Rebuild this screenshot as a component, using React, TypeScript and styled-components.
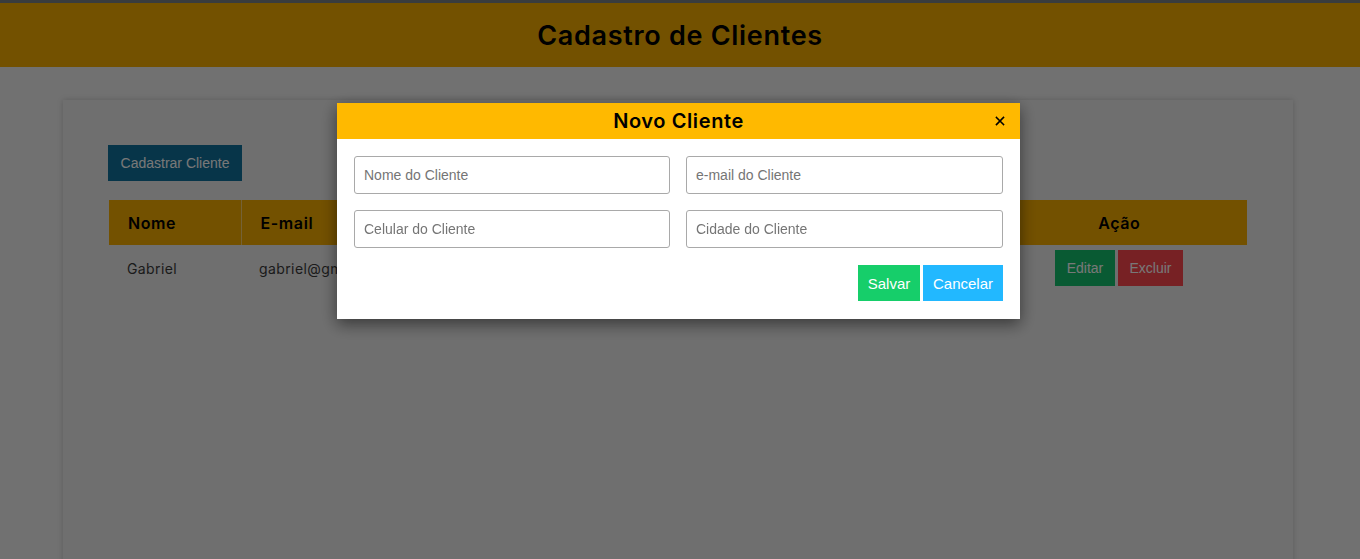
import { createGlobalStyle } from 'styled-components';
import styled from 'styled-components';

const GlobalStyle = createGlobalStyle`
	html, body {
		margin: 0;
		padding: 0;
		background: #f0f0f0;
		height: 100%;
		overflow: hidden;
		font-family: Inter, 'Noto Sans', sans-serif;
	}
	* {
		box-sizing: border-box;
	}
`;

const Page = styled.div`
	min-height: 559px;
	background: #f0f0f0;
	border-top: 3px solid #7a7f84;
`;

const Header = styled.header`
	height: 64px;
	background: #f5ac00;
	display: flex;
	align-items: center;
	justify-content: center;
`;

const Title = styled.h1`
	margin: 0;
	font-size: 27px;
	font-weight: 600;
	letter-spacing: 0.7px;
	color: #000;
`;

const Main = styled.main`
	padding-top: 33px;
`;

const Card = styled.section`
	margin-left: 63px;
	width: 1230px;
	min-height: 480px;
	background: #ebebeb;
	box-shadow: 0 0 6px rgba(0, 0, 0, 0.18);
	padding: 45px 46px 45px 45px;
	display: flex;
	flex-direction: column;
	gap: 19px;
`;

const Button = styled.button<{ $bg: string; $w?: number }>`
	height: 36px;
	width: ${(p) => (p.$w ? `${p.$w}px` : 'auto')};
	padding: 0;
	border: none;
	border-radius: 0;
	background: ${(p) => p.$bg};
	color: #fff;
	font-family: 'Liberation Sans', Arial, sans-serif;
	font-size: 14px;
	cursor: pointer;
`;

const NewButton = styled(Button)`
	align-self: flex-start;
`;

const Table = styled.table`
	margin-left: 1px;
	width: 1138px;
	border-collapse: collapse;
	table-layout: fixed;
`;

const Th = styled.th<{ $w: number; $center?: boolean }>`
	width: ${(p) => p.$w}px;
	height: 45px;
	background: #f5ac00;
	text-align: ${(p) => (p.$center ? 'center' : 'left')};
	padding: 0 19px;
	font-size: 16px;
	font-weight: 600;
	letter-spacing: 0.6px;
	color: #000;
	border-right: 1px solid rgba(255, 255, 255, 0.45);

	&:last-child {
		border-right: none;
	}
`;

const Td = styled.td<{ $center?: boolean }>`
	height: 46px;
	padding: 0 18px;
	font-size: 14px;
	letter-spacing: 0.4px;
	color: #3a3a3a;
	text-align: ${(p) => (p.$center ? 'center' : 'left')};
	white-space: nowrap;
	overflow: hidden;
`;

const Actions = styled.div`
	display: inline-flex;
	gap: 3px;
`;

const Overlay = styled.div`
	position: fixed;
	inset: 0;
	background: rgba(0, 0, 0, 0.53);
	display: flex;
	justify-content: flex-start;
	align-items: flex-start;
	padding: 103px 0 0 337px;
`;

const Modal = styled.div`
	width: 683px;
	background: #fff;
	box-shadow: 0 5px 15px rgba(0, 0, 0, 0.5);
`;

const ModalHeader = styled.div`
	position: relative;
	height: 36px;
	background: #ffb900;
	display: flex;
	align-items: center;
	justify-content: center;
`;

const ModalTitle = styled.h2`
	margin: 0;
	font-size: 20px;
	font-weight: 600;
	letter-spacing: 0.6px;
	color: #000;
`;

const Close = styled.button`
	position: absolute;
	right: 14px;
	top: 12px;
	width: 12px;
	height: 12px;
	padding: 0;
	border: none;
	background: transparent;
	display: flex;
	align-items: center;
	justify-content: center;
	cursor: pointer;
`;

const ModalBody = styled.div`
	padding: 17px 17px 18px;
`;

const Fields = styled.div`
	display: grid;
	grid-template-columns: 316px 317px;
	gap: 16px;
`;

const Input = styled.input`
	height: 38px;
	width: 100%;
	border: 1px solid #a9a9a9;
	border-radius: 3px;
	padding: 0 9px;
	font-family: 'Liberation Sans', Arial, sans-serif;
	font-size: 14px;
	color: #333;
	outline: none;

	&::placeholder {
		color: #757575;
	}
`;

const Footer = styled.div`
	margin-top: 17px;
	display: flex;
	justify-content: flex-end;
	gap: 3px;
`;

const ModalButton = styled(Button)`
	font-size: 15px;
`;

export default function App() {
	const clientes = [
		{
			nome: 'Gabriel',
			email: 'gabriel@gmail.com',
			celular: '(11) 99999-9999',
			cidade: 'São Paulo',
		},
	];

	return (
		<>
			<GlobalStyle />
			<Page>
				<Header>
					<Title>Cadastro de Clientes</Title>
				</Header>
				<Main>
					<Card>
						<NewButton $bg="#0f719b" $w={134}>
							Cadastrar Cliente
						</NewButton>
						<Table>
							<thead>
								<tr>
									<Th $w={132}>Nome</Th>
									<Th $w={250}>E-mail</Th>
									<Th $w={250}>Celular</Th>
									<Th $w={250}>Cidade</Th>
									<Th $w={256} $center>
										Ação
									</Th>
								</tr>
							</thead>
							<tbody>
								{clientes.map((c) => (
									<tr key={c.email}>
										<Td>{c.nome}</Td>
										<Td>{c.email}</Td>
										<Td>{c.celular}</Td>
										<Td>{c.cidade}</Td>
										<Td $center>
											<Actions>
												<Button $bg="#15bf6c" $w={60}>
													Editar
												</Button>
												<Button $bg="#fd464d" $w={65}>
													Excluir
												</Button>
											</Actions>
										</Td>
									</tr>
								))}
							</tbody>
						</Table>
					</Card>
				</Main>
			</Page>

			<Overlay>
				<Modal>
					<ModalHeader>
						<ModalTitle>Novo Cliente</ModalTitle>
						<Close aria-label="Fechar">
							<svg width="10" height="10" viewBox="0 0 10 10">
								<path
									d="M1.5 1.5 L8.5 8.5 M8.5 1.5 L1.5 8.5"
									stroke="#000"
									strokeWidth="1.6"
									strokeLinecap="square"
								/>
							</svg>
						</Close>
					</ModalHeader>
					<ModalBody>
						<Fields>
							<Input placeholder="Nome do Cliente" />
							<Input placeholder="e-mail do Cliente" />
							<Input placeholder="Celular do Cliente" />
							<Input placeholder="Cidade do Cliente" />
						</Fields>
						<Footer>
							<ModalButton $bg="#16ce6a" $w={62}>
								Salvar
							</ModalButton>
							<ModalButton $bg="#22b8ff" $w={80}>
								Cancelar
							</ModalButton>
						</Footer>
					</ModalBody>
				</Modal>
			</Overlay>
		</>
	);
}
